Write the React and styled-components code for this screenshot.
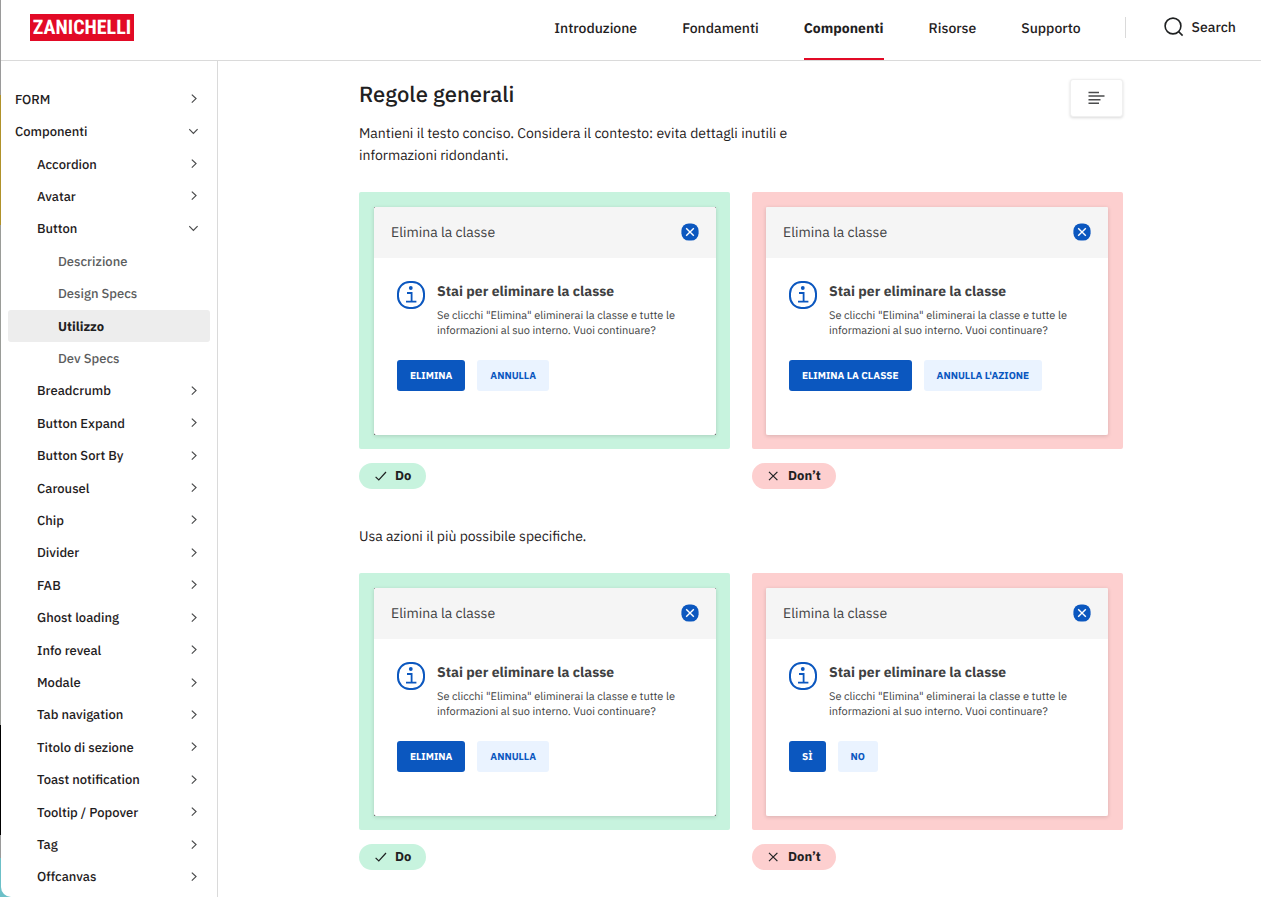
import styled, { createGlobalStyle, css } from "styled-components";

const navItems = ["Introduzione", "Fondamenti", "Componenti", "Risorse", "Supporto"];

const menuItems = [
  { label: "FORM", level: 0 },
  { label: "Componenti", level: 0, open: true },
  { label: "Accordion", level: 1 },
  { label: "Avatar", level: 1 },
  { label: "Button", level: 1, open: true },
  { label: "Descrizione", level: 2 },
  { label: "Design Specs", level: 2 },
  { label: "Utilizzo", level: 2, active: true },
  { label: "Dev Specs", level: 2 },
  { label: "Breadcrumb", level: 1 },
  { label: "Button Expand", level: 1 },
  { label: "Button Sort By", level: 1 },
  { label: "Carousel", level: 1 },
  { label: "Chip", level: 1 },
  { label: "Divider", level: 1 },
  { label: "FAB", level: 1 },
  { label: "Ghost loading", level: 1 },
  { label: "Info reveal", level: 1 },
  { label: "Modale", level: 1 },
  { label: "Tab navigation", level: 1 },
  { label: "Titolo di sezione", level: 1 },
  { label: "Toast notification", level: 1 },
  { label: "Tooltip / Popover", level: 1 },
  { label: "Tag", level: 1 },
  { label: "Offcanvas", level: 1 },
];

const rules = [
  {
    text: "Mantieni il testo conciso. Considera il contesto: evita dettagli inutili e informazioni ridondanti.",
    good: ["ELIMINA", "ANNULLA"],
    bad: ["ELIMINA LA CLASSE", "ANNULLA L'AZIONE"],
  },
  {
    text: "Usa azioni il più possibile specifiche.",
    good: ["ELIMINA", "ANNULLA"],
    bad: ["SÌ", "NO"],
  },
];

function Chevron({ open }) {
  return (
    <svg width="10" height="10" viewBox="0 0 10 10" fill="none" stroke="#4a4b4c" strokeWidth="1.2">
      <path d={open ? "M0.2 2.2L4.4 6.4L8.6 2.2" : "M2.8 0.6L7 4.6L2.8 8.6"} />
    </svg>
  );
}

function ModalExample({ actions, good }) {
  return (
    <Frame $good={good}>
      <Corners $good={good}>
        <Modal>
          <ModalHeader>
            <span>Elimina la classe</span>
            <CloseButton aria-label="Chiudi">
              <svg width="18" height="18" viewBox="0 0 18 18" fill="none">
                <rect x="0.4" y="0.4" width="17.2" height="17.2" rx="7.4" fill="#0b57bf" />
                <path d="M5.2 5.2L12.8 12.8M12.8 5.2L5.2 12.8" stroke="#fff" strokeWidth="1.4" />
              </svg>
            </CloseButton>
          </ModalHeader>
          <ModalBody>
            <Message>
              <svg width="28" height="28" viewBox="0 0 28 28" fill="none" stroke="#0b57bf">
                <rect x="1" y="1" width="26" height="26" rx="11.4" strokeWidth="2" />
                <circle cx="13.8" cy="7" r="1.9" fill="#0b57bf" stroke="none" />
                <path d="M10 12H14.6V20.6M9 20.6H19.4" strokeWidth="1.8" />
              </svg>
              <div>
                <h3>Stai per eliminare la classe</h3>
                <p>
                  Se clicchi "Elimina" eliminerai la classe e tutte le informazioni al suo interno.
                  Vuoi continuare?
                </p>
              </div>
            </Message>
            <Actions>
              <ActionButton $primary>{actions[0]}</ActionButton>
              <ActionButton>{actions[1]}</ActionButton>
            </Actions>
          </ModalBody>
        </Modal>
      </Corners>
    </Frame>
  );
}

function Example({ actions, good }) {
  return (
    <div>
      <ModalExample actions={actions} good={good} />
      <Pill $good={good}>
        <svg width="13" height="12" viewBox="0 0 13 12" fill="none" stroke="#1f2122" strokeWidth="1.2">
          <path d={good ? "M1.6 6.8L4.8 10L12 2" : "M2 1.8L10.4 10.2M10.4 1.8L2 10.2"} />
        </svg>
        {good ? "Do" : "Don’t"}
      </Pill>
    </div>
  );
}

export default function App() {
  return (
    <Desktop>
      <GlobalStyle />
      <Page>
        <Header>
          <Logo href="#">ZANICHELLI</Logo>
          <Nav>
            {navItems.map((item) => (
              <NavLink key={item} href="#" $active={item === "Componenti"}>
                {item}
              </NavLink>
            ))}
          </Nav>
          <Divider />
          <SearchButton>
            <svg width="20" height="20" viewBox="0 0 20 20" fill="none" stroke="#1f2122" strokeWidth="1.6">
              <circle cx="9" cy="9" r="7.9" />
              <path d="M14.6 14.6L18.6 18.6" />
            </svg>
            Search
          </SearchButton>
        </Header>
        <Columns>
          <Sidebar>
            {menuItems.map((item) => (
              <MenuItem key={item.label} href="#" $level={item.level} $active={item.active}>
                {item.label}
                {item.level < 2 && <Chevron open={item.open} />}
              </MenuItem>
            ))}
          </Sidebar>
          <Main>
            <TitleRow>
              <h2>Regole generali</h2>
              <TocButton aria-label="Indice">
                <svg width="17" height="14" viewBox="0 0 17 14" stroke="#4a4b4c" strokeWidth="1.6">
                  <path d="M0.5 1.5H11M0.5 5H16.5M0.5 8.7H12.5M0.5 12.3H11" />
                </svg>
              </TocButton>
            </TitleRow>
            {rules.map((rule) => (
              <Rule key={rule.text}>
                <p>{rule.text}</p>
                <Examples>
                  <Example actions={rule.good} good />
                  <Example actions={rule.bad} />
                </Examples>
              </Rule>
            ))}
          </Main>
        </Columns>
      </Page>
    </Desktop>
  );
}

const GlobalStyle = createGlobalStyle`
  * {
    box-sizing: border-box;
  }
  body {
    margin: 0;
    color: #1f2122;
    font-family: "IBM Plex Sans", Roboto, sans-serif;
    text-rendering: geometricPrecision;
  }
  h2, h3, p {
    margin: 0;
  }
  a {
    color: inherit;
    text-decoration: none;
  }
  button {
    border: none;
    padding: 0;
    background: none;
    color: inherit;
    font-family: inherit;
    text-rendering: inherit;
    cursor: pointer;
  }
  svg {
    display: block;
    flex-shrink: 0;
  }
`;

const Desktop = styled.div`
  padding-left: 1px;
  background: linear-gradient(
    #9a9a9a 0 95px,
    #b0922a 95px 225px,
    #9a9c98 225px 725px,
    #000 725px 835px,
    #9a9a9a 835px 858px,
    #6cc0c8 858px
  );
`;

const Page = styled.div`
  display: flex;
  flex-direction: column;
  min-height: 100vh;
  border-radius: 0 0 0 10px;
  background-color: #fff;
`;

const Header = styled.header`
  display: flex;
  align-items: center;
  height: 61px;
  padding: 0 25px 0 29px;
  border-bottom: 1px solid #dadada;
`;

const Logo = styled.a`
  display: flex;
  align-items: center;
  justify-content: center;
  width: 104px;
  height: 27px;
  margin: 0 auto 6px 0;
  background-color: #e20a26;
  color: #fff;
  font-family: "Liberation Sans Narrow", "Roboto Condensed", "Liberation Sans", sans-serif;
  font-size: 20px;
  font-weight: 700;
`;

const Nav = styled.nav`
  display: flex;
  align-self: stretch;
  gap: 45px;
`;

const NavLink = styled.a`
  height: 60px;
  padding-top: 18px;
  border-bottom: 2px solid transparent;
  font-size: 14px;
  line-height: 20px;
  font-weight: 500;
  ${(props) =>
    props.$active &&
    css`
      border-color: #e20a26;
      font-weight: 700;
    `}
`;

const Divider = styled.div`
  width: 1px;
  height: 21px;
  margin: 0 38px 5px 44px;
  background-color: #dadada;
`;

const SearchButton = styled.button`
  display: flex;
  align-items: center;
  gap: 8px;
  margin-bottom: 6px;
  font-size: 14px;
  line-height: 20px;
  font-weight: 500;
`;

const Columns = styled.div`
  display: flex;
  flex: 1;
`;

const Sidebar = styled.nav`
  display: flex;
  flex-direction: column;
  width: 217px;
  flex-shrink: 0;
  padding: 22px 7px 4px;
  border-right: 1px solid #dadada;
`;

const MenuItem = styled.a`
  display: flex;
  flex: 1 0 32px;
  align-items: center;
  justify-content: space-between;
  padding-right: 11px;
  padding-left: ${(props) => [7, 29, 50][props.$level]}px;
  border-radius: 3px;
  background-color: ${(props) => (props.$active ? "#ededed" : "transparent")};
  color: ${(props) => (props.$level === 2 && !props.$active ? "#5c5d5e" : "#1f2122")};
  font-size: 13px;
  font-weight: ${(props) => (props.$active ? 700 : 500)};
`;

const Main = styled.main`
  flex: 1;
  min-width: 0;
  padding: 18px 138px 24px 141px;
`;

const TitleRow = styled.div`
  display: flex;
  align-items: flex-start;
  justify-content: space-between;
  margin-bottom: 5px;

  h2 {
    font-size: 22px;
    line-height: 32px;
    font-weight: 500;
  }
`;

const TocButton = styled.button`
  display: flex;
  align-items: center;
  justify-content: center;
  width: 53px;
  height: 38px;
  border: 1px solid #f0f0f0;
  border-radius: 3px;
  background-color: #fff;
  box-shadow: 0 1px 3px rgba(0, 0, 0, 0.15);
`;

const Rule = styled.section`
  margin-bottom: 36px;

  &:last-child {
    margin-bottom: 0;
  }
  > p {
    max-width: 460px;
    margin-bottom: 26px;
    font-size: 14px;
    line-height: 22px;
  }
`;

const Examples = styled.div`
  display: grid;
  grid-template-columns: 1fr 1fr;
  gap: 22px;
`;

const Frame = styled.div`
  padding: ${(props) => (props.$good ? "15px 14px 14px 15px" : "15px 15px 14px 14px")};
  border-radius: 2px;
  background-color: ${(props) => (props.$good ? "#c7f3de" : "#fdcfcf")};
`;

const Corners = styled.div`
  background-color: ${(props) => (props.$good ? "#333" : "transparent")};
  box-shadow: 0 1px 4px rgba(0, 0, 0, 0.15);
`;

const Modal = styled.div`
  border-radius: 2px;
  background-color: #fff;
  color: #404142;
  overflow: hidden;
`;

const ModalHeader = styled.div`
  display: flex;
  align-items: center;
  justify-content: space-between;
  height: 51px;
  padding: 0 17px 2px;
  background-color: #f5f5f5;
  font-size: 14px;
`;

const CloseButton = styled.button`
  width: 18px;
  height: 18px;
`;

const ModalBody = styled.div`
  padding: 23px 23px 44px;
`;

const Message = styled.div`
  display: flex;
  gap: 12px;
  margin-bottom: 21px;

  h3 {
    margin-bottom: 8px;
    font-size: 14px;
    line-height: 20px;
    font-weight: 700;
  }
  p {
    font-size: 11px;
    line-height: 15px;
  }
`;

const Actions = styled.div`
  display: flex;
  gap: 12px;
`;

const ActionButton = styled.button`
  height: 31px;
  padding: 0 13px;
  border-radius: 3px;
  background-color: ${(props) => (props.$primary ? "#0b57bf" : "#eaf3ff")};
  color: ${(props) => (props.$primary ? "#fff" : "#0b57bf")};
  font-size: 10px;
  font-weight: 700;
`;

const Pill = styled.div`
  display: flex;
  align-items: center;
  gap: 8px;
  width: fit-content;
  height: 26px;
  margin-top: 14px;
  padding: 0 15px 1px;
  border-radius: 13px;
  background-color: ${(props) => (props.$good ? "#c7f3de" : "#fdcfcf")};
  font-size: 13px;
  font-weight: 700;
`;
